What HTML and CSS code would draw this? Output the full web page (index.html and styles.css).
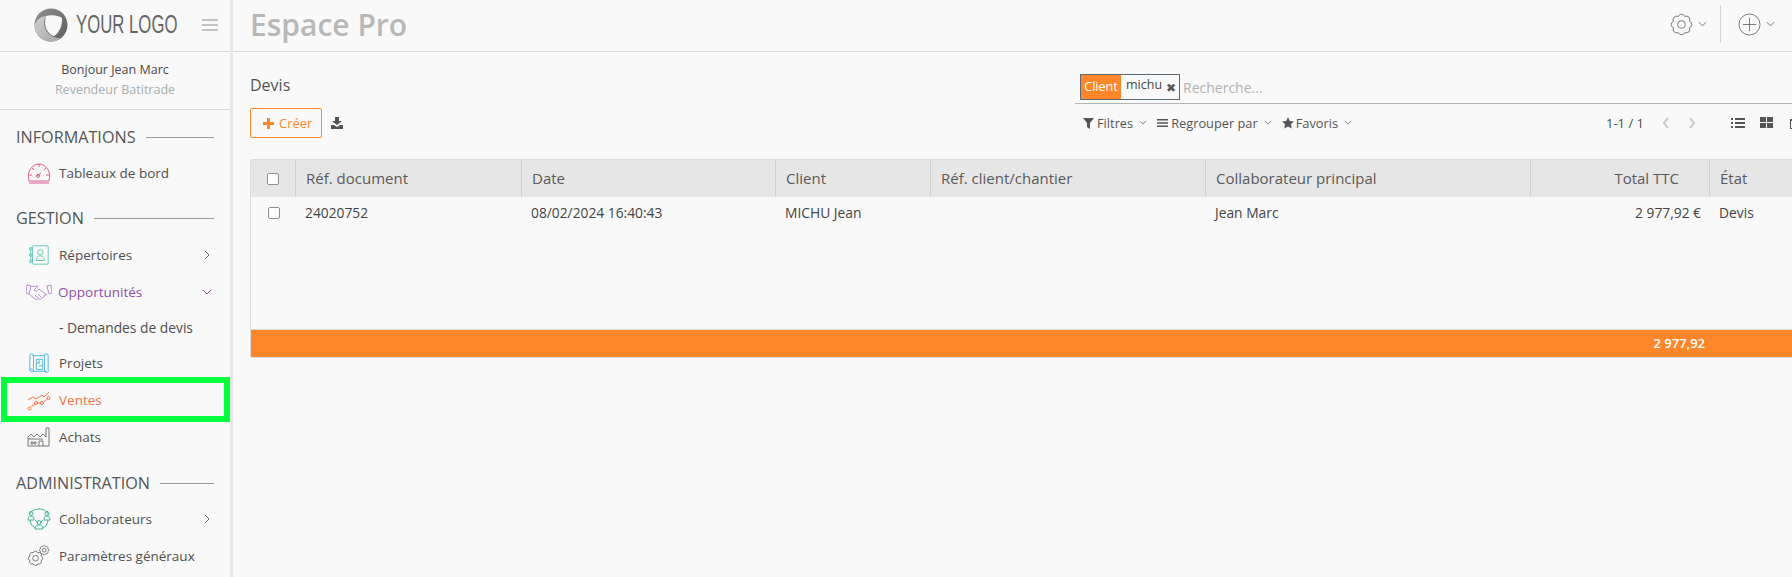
FILE: index.html
```html
<!DOCTYPE html>
<html lang="fr">
<head>
<meta charset="utf-8">
<title>Espace Pro</title>
<link rel="stylesheet" href="styles.css">
</head>
<body>
<div class="sidebar">
	<div class="brand">
		<svg class="brand-mark" viewBox="0 0 34 34">
			<defs>
				<linearGradient id="lg1" x1="0" y1="0" x2="1" y2="1"><stop offset="0" stop-color="#8f8f8f"/><stop offset="1" stop-color="#5e5e5e"/></linearGradient>
				<linearGradient id="lg2" x1="0" y1="0" x2="1" y2="1"><stop offset="0" stop-color="#d0d0d0"/><stop offset="1" stop-color="#a5a7a7"/></linearGradient>
			</defs>
			<circle cx="17" cy="17" r="16.500" fill="url(#lg1)"/>
			<path d="M.5 17C3 11 7 8.500 12 8 9 12 9.500 20 14 25c3 3.500 7 5 13 5-3 2.500-6 3.500-10 3.500C8 33.500 1 26 .5 17z" fill="url(#lg2)"/>
			<path d="M12 8c5-1.500 12-1 16 2 .5 8-3 15-8 18C14 27 9 18 12 8z" fill="#f9f9f9"/>
		</svg>
		<span class="brand-name">YOUR LOGO</span>
		<svg class="burger" viewBox="0 0 16 12"><path d="M0 1h16M0 6h16M0 11h16" stroke="#8b8b8b" fill="none"/></svg>
	</div>
	<div class="user">
		<div class="user-name">Bonjour Jean Marc</div>
		<div class="user-role">Revendeur Batitrade</div>
	</div>
	<div class="section first"><span>INFORMATIONS</span><i></i></div>
	<a class="item" href="#">
		<svg class="ico" viewBox="0 0 24 22" stroke="#e0578f"><path d="M2 19C-1 9 6 2 12 2s13 7 10 17zM2 21h20M12 2v3M5 6l2 2M19 6l-2 2M2 13h3M22 13h-3M10 14l4-3"/><circle cx="11" cy="14" r="1.500"/></svg>
		<span>Tableaux de bord</span>
	</a>
	<div class="section"><span>GESTION</span><i></i></div>
	<a class="item" href="#">
		<svg class="ico" viewBox="0 0 24 24" stroke="#5cc8b5"><rect x="5" y="2" width="17" height="20" rx="1"/><path d="M3 4v16M9 18c0-4 2-5 4-5s5 1 5 5z"/><circle cx="13.500" cy="9" r="3"/><circle cx="3" cy="5" r="1.500"/><circle cx="3" cy="12" r="1.500"/><circle cx="3" cy="19" r="1.500"/></svg>
		<span>Répertoires</span>
		<svg class="caret" viewBox="0 0 10 10"><path d="M3 1l4 4-4 4"/></svg>
	</a>
	<a class="item purple" href="#">
		<svg class="ico wide" viewBox="0 0 26 18" stroke="#b78fd0"><path d="M1 2l4 1-2 8-3-1zM25 2l-4 1 2 8 3-1zM5 3c3 1 5 0 7 0l-4 4c1 2 3 1 5-1l8 6M3 11l6 5c2 1 3 0 4 0s3 0 3-1 2 0 2-2 3 0 3-2M9 12l3 3M12 11l3 3"/></svg>
		<span>Opportunités</span>
		<svg class="caret" viewBox="0 0 10 10"><path d="M1 3l4 4 4-4"/></svg>
	</a>
	<a class="item sub" href="#"><span>- Demandes de devis</span></a>
	<a class="item" href="#">
		<svg class="ico" viewBox="0 0 24 24" stroke="#49b4d8"><path d="M5 4h14M5 21h15M2 20V4a2 2 0 0 1 4 0v14M2 20a2.500 2.500 0 0 0 4 1 2 2 0 0 0-4-1M18 21V4a2 2 0 0 1 4 0v15a2 2 0 0 1-4 2M9 8h7v11H9zM9 12h4M12 8v4M12 15h4"/></svg>
		<span>Projets</span>
	</a>
	<a class="item active" href="#">
		<svg class="ico" viewBox="0 0 24 22" stroke="#f5734a"><path d="M1 11l5-3 3 2 6-4 2 2 5-5M4 18l4-3M10 14h4M16.500 13l4-3"/><circle cx="2.500" cy="19.500" r="1.500"/><circle cx="9" cy="14" r="1.500"/><circle cx="15" cy="14" r="1.500"/><circle cx="21.500" cy="9" r="1.500"/></svg>
		<span>Ventes</span>
		<div class="highlight"></div>
	</a>
	<a class="item" href="#">
		<svg class="ico" viewBox="0 0 24 20" stroke="#777"><path d="M1 19V10l3-3 3 3 3-3 3 3 3-3 3 3V1h3v18zM1 12h15M12 19v-5h4v5M4 15h2v2H4zM7 15h2v2H7z"/></svg>
		<span>Achats</span>
	</a>
	<div class="section last"><span>ADMINISTRATION</span><i></i></div>
	<a class="item" href="#">
		<svg class="ico" viewBox="0 0 24 22" stroke="#3fb49a"><path d="M3 6c1-3 5-5 9-5s8 2 9 5M3 12c0 4 3 7 5 8M21 12c0 4-3 7-5 8M1 12c0-3 1-4 3-4s3 1 3 4zM17 12c0-3 1-4 3-4s3 1 3 4zM8 21c0-3 2-4 4-4s4 1 4 4zM8 12l3 3M16 12l-3 3"/><circle cx="4" cy="5.500" r="2"/><circle cx="20" cy="5.500" r="2"/><circle cx="12" cy="14.500" r="2"/></svg>
		<span>Collaborateurs</span>
		<svg class="caret" viewBox="0 0 10 10"><path d="M3 1l4 4-4 4"/></svg>
	</a>
	<a class="item" href="#">
		<svg class="ico" viewBox="0 0 24 23" stroke="#777"><path vector-effect="non-scaling-stroke" transform="translate(0 5.500) scale(.7)" d="M8.600 3.700A3.600 3.600 0 0 1 15.400 3.700 3.600 3.600 0 0 1 20.300 8.600 3.600 3.600 0 0 1 20.300 15.400 3.600 3.600 0 0 1 15.400 20.300 3.600 3.600 0 0 1 8.600 20.300 3.600 3.600 0 0 1 3.700 15.400 3.600 3.600 0 0 1 3.700 8.600 3.600 3.600 0 0 1 8.600 3.700z"/><circle cx="8.400" cy="13.900" r="3"/><path vector-effect="non-scaling-stroke" transform="translate(12 0) scale(.45)" d="M8.600 3.700A3.600 3.600 0 0 1 15.400 3.700 3.600 3.600 0 0 1 20.300 8.600 3.600 3.600 0 0 1 20.300 15.400 3.600 3.600 0 0 1 15.400 20.300 3.600 3.600 0 0 1 8.600 20.300 3.600 3.600 0 0 1 3.700 15.400 3.600 3.600 0 0 1 3.700 8.600 3.600 3.600 0 0 1 8.600 3.700z"/><circle cx="17.400" cy="5.400" r="2"/></svg>
		<span>Paramètres généraux</span>
	</a>
</div>

<div class="main">
	<div class="topbar">
		<div class="app-title">Espace Pro</div>
		<div class="top-tools">
			<svg class="top-ico" viewBox="0 0 24 24"><path d="M8.600 3.700A3.600 3.600 0 0 1 15.400 3.700 3.600 3.600 0 0 1 20.300 8.600 3.600 3.600 0 0 1 20.300 15.400 3.600 3.600 0 0 1 15.400 20.300 3.600 3.600 0 0 1 8.600 20.300 3.600 3.600 0 0 1 3.700 15.400 3.600 3.600 0 0 1 3.700 8.600 3.600 3.600 0 0 1 8.600 3.700z"/><circle cx="12" cy="12" r="4"/></svg>
			<svg class="top-caret" viewBox="0 0 10 6"><path d="M1 1l4 4 4-4"/></svg>
			<div class="top-sep"></div>
			<svg class="top-ico" viewBox="0 0 24 24"><circle cx="12" cy="12" r="11"/><path d="M12 5v14M5 12h14"/></svg>
			<svg class="top-caret" viewBox="0 0 10 6"><path d="M1 1l4 4 4-4"/></svg>
		</div>
	</div>

	<div class="panel">
		<div class="panel-left">
			<div class="crumb">Devis</div>
			<div class="actions">
				<button class="create"><svg class="plus" viewBox="0 0 11 11"><path d="M4 0h3v4h4v3H7v4H4V7H0V4h4z"/></svg>Créer</button>
				<svg class="download" viewBox="0 0 12 12"><path d="M4 0h4v4h3L6 8 1 4h3zM0 8h3l3 2 3-2h3v4H0z" fill="#555"/></svg>
			</div>
		</div>
		<div class="panel-right">
			<div class="search">
				<div class="facet"><span class="facet-key">Client</span><span class="facet-val">michu</span><span class="facet-x">✖</span></div>
				<span class="search-hint">Recherche...</span>
			</div>
			<div class="filters">
				<div class="options">
					<span class="opt"><svg viewBox="0 0 12 12"><path d="M0 1h11L7 6v6L4 10V6z"/></svg>Filtres<svg class="opt-caret" viewBox="0 0 10 6"><path d="M1 1l4 4 4-4"/></svg></span>
					<span class="opt"><svg viewBox="0 0 12 12"><path d="M0 2h11v1.500H0zM0 5.200h11v1.500H0zM0 8.500h11V10H0z"/></svg>Regrouper par<svg class="opt-caret" viewBox="0 0 10 6"><path d="M1 1l4 4 4-4"/></svg></span>
					<span class="opt"><svg viewBox="0 0 12 12"><path d="M6 0l1.800 3.900 4.200.5-3.100 2.900.8 4.200L6 9.400l-3.700 2.100.8-4.200L0 4.400l4.200-.5z"/></svg>Favoris<svg class="opt-caret" viewBox="0 0 10 6"><path d="M1 1l4 4 4-4"/></svg></span>
				</div>
				<div class="pager">
					<span>1-1 / 1</span>
					<svg class="pager-arrow" viewBox="0 0 8 12"><path d="M6 1L2 6l4 5"/></svg>
					<svg class="pager-arrow" viewBox="0 0 8 12"><path d="M2 1l4 5-4 5"/></svg>
				</div>
				<div class="views">
					<svg viewBox="0 0 14 12"><path d="M0 1h2v2H0zM4 1h10v2H4zM0 5h2v2H0zM4 5h10v2H4zM0 9h2v2H0zM4 9h10v2H4z"/></svg>
					<svg viewBox="0 0 14 12"><path d="M0 0h6v5H0zM7 0h6v5H7zM0 6h6v5H0zM7 6h6v5H7z"/></svg>
					<svg viewBox="0 0 14 12"><path d="M1 2h11v10H1zM2 4v7h9V4z" fill-rule="evenodd"/></svg>
				</div>
			</div>
		</div>
	</div>

	<table class="list">
		<colgroup>
			<col class="c-check"><col class="c-ref"><col class="c-date"><col class="c-client"><col class="c-chantier"><col class="c-collab"><col class="c-total"><col class="c-state">
		</colgroup>
		<thead>
			<tr>
				<th class="check"><span class="box"></span></th>
				<th>Réf. document</th>
				<th>Date</th>
				<th>Client</th>
				<th>Réf. client/chantier</th>
				<th>Collaborateur principal</th>
				<th class="num">Total TTC</th>
				<th>État</th>
			</tr>
		</thead>
		<tbody>
			<tr class="row">
				<td class="check"><span class="box"></span></td>
				<td>24020752</td>
				<td>08/02/2024 16:40:43</td>
				<td>MICHU Jean</td>
				<td></td>
				<td>Jean Marc</td>
				<td class="num">2 977,92 €</td>
				<td>Devis</td>
			</tr>
			<tr class="filler"><td colspan="8"></td></tr>
		</tbody>
		<tfoot>
			<tr>
				<td colspan="6"></td>
				<td class="num">2 977,92</td>
				<td></td>
			</tr>
		</tfoot>
	</table>
</div>
</body>
</html>
```

FILE: styles.css
```css
* {
	box-sizing: border-box;
}

html, body {
	margin: 0;
	height: 100%;
	overflow: hidden;
}

body {
	display: flex;
	background-color: #f9f9f9;
	font-family: "Open Sans", "Noto Sans", sans-serif;
	font-size: 13.500px;
	color: #4a4a4a;
}

/* sidebar */
.sidebar {
	width: 233px;
	flex: none;
	height: 100%;
	border-right: 3px solid #e6e6e6;
}

.brand {
	height: 52px;
	display: flex;
	align-items: center;
	padding: 0 0 2px 34px;
	border-bottom: 1px solid #d9d9d9;
}

.brand-mark {
	width: 34px;
	height: 34px;
	flex: none;
}

.brand-name {
	margin-left: 8px;
	font-family: "Liberation Sans", sans-serif;
	font-size: 25px;
	color: #666;
	width: 126px;
	white-space: nowrap;
	transform: scaleX(.67);
	transform-origin: left center;
}

.burger {
	width: 16px;
	height: 12px;
}

.user {
	height: 58px;
	padding-top: 8px;
	text-align: center;
	border-bottom: 1px solid #d9d9d9;
	line-height: 20px;
	font-size: 12.500px;
}

.user-role {
	color: #a9adad;
}

.section {
	display: flex;
	align-items: center;
	gap: 10px;
	padding: 0 16px;
	height: 22px;
	margin-top: 16px;
	font-size: 16.200px;
	color: #555;
}

.section.first {
	margin-top: 16px;
}

.section.last {
	margin-top: 17px;
}

.section i {
	flex: 1;
	height: 1px;
	background-color: #999;
}

.item {
	position: relative;
	display: flex;
	align-items: center;
	height: 37px;
	padding: 0 18px 0 27px;
	text-decoration: none;
	color: #4f4f4f;
}

.section + .item {
	margin-top: 7px;
}

.section.first + .item, .section.last + .item {
	margin-top: 6px;
}

.ico {
	width: 24px;
	height: 22px;
	flex: none;
	margin-right: 8px;
	fill: none;
	stroke-width: 1;
}

.ico.wide {
	width: 26px;
	height: 18px;
	margin: 0 6px 0 -1px;
}

.item span {
	flex: 1;
}

.caret {
	width: 10px;
	height: 10px;
	fill: none;
	stroke: #666;
}

.purple {
	color: #8e4ea8;
}

.purple .caret {
	stroke: #8e4ea8;
}

.sub {
	height: 34px;
	padding-left: 59px;
	font-size: 13.800px;
}

.active {
	color: #f5734a;
}

.highlight {
	position: absolute;
	top: -4px;
	bottom: -4px;
	left: 1px;
	right: 0;
	border: 6px solid #00ff3c;
}

/* main area */
.main {
	flex: 1;
	min-width: 0;
	overflow: hidden;
}

.topbar {
	height: 52px;
	display: flex;
	align-items: center;
	justify-content: space-between;
	padding: 0 17px 3px 17px;
	border-bottom: 1px solid #d9d9d9;
}

.app-title {
	font-size: 30px;
	font-weight: 600;
	color: #b8b8b8;
}

.top-tools {
	display: flex;
	align-items: center;
}

.top-ico {
	width: 23px;
	height: 23px;
	fill: none;
	stroke: #777;
	stroke-width: 1;
}

.top-caret {
	width: 9px;
	height: 6px;
	margin-left: 5px;
	fill: none;
	stroke: #666;
}

.top-sep {
	width: 1px;
	height: 38px;
	margin: 0 17px 0 13px;
	background-color: #d4d4d4;
}

.panel {
	display: flex;
	justify-content: space-between;
	padding-left: 17px;
	height: 107px;
}

.panel-left {
	padding-top: 22px;
}

.crumb {
	font-size: 16px;
	line-height: 22px;
	color: #555;
}

.actions {
	display: flex;
	align-items: center;
	margin-top: 12px;
}

.create {
	display: flex;
	align-items: center;
	width: 72px;
	height: 30px;
	padding: 0 0 0 12px;
	background: none;
	border: 1px solid #ff8629;
	border-radius: 2px;
	color: #ff8629;
	font-family: inherit;
	font-size: 13px;
}

.plus {
	width: 11px;
	height: 11px;
	margin-right: 5px;
	fill: #ff8629;
}

.download {
	width: 12px;
	height: 12px;
	margin-left: 9px;
}

.panel-right {
	width: 717px;
	flex: none;
	padding-top: 22px;
}

.search {
	display: flex;
	align-items: center;
	gap: 3px;
	height: 30px;
	padding: 0 0 3px 5px;
	border-bottom: 1px solid #b5b5b5;
}

.facet {
	display: flex;
	align-items: center;
	width: 100px;
	height: 26px;
	border: 1px solid #5c6a74;
	font-size: 12.500px;
}

.facet-key {
	width: 40px;
	height: 100%;
	line-height: 23px;
	text-align: center;
	color: #fff;
	background-color: #ff8629;
}

.facet-val {
	margin: -6px 0 0 5px;
}

.facet-x {
	margin-left: 4px;
	font-size: 12px;
	color: #555;
}

.search-hint {
	font-size: 14px;
	color: #b3b3b3;
}

.filters {
	display: flex;
	align-items: center;
	height: 37px;
	padding-left: 8px;
}

.options {
	display: flex;
	flex: none;
	gap: 10px;
	width: 523px;
	font-size: 12.800px;
	color: #555;
}

.opt {
	display: flex;
	align-items: center;
}

.opt svg {
	width: 12px;
	height: 12px;
	margin-right: 2px;
	fill: #555;
}

.opt .opt-caret {
	width: 8px;
	height: 5px;
	margin: 0 0 0 6px;
	fill: none;
	stroke: #666;
}

.pager {
	display: flex;
	flex: none;
	align-items: center;
	width: 125px;
	font-size: 13px;
}

.pager-arrow {
	width: 8px;
	height: 12px;
	margin-left: 18px;
	fill: none;
	stroke: #c8c8c8;
	stroke-width: 2;
}

.views {
	display: flex;
	flex: none;
	gap: 15px;
}

.views svg {
	width: 14px;
	height: 12px;
	flex: none;
	fill: #555;
}

/* list */
.list {
	width: 1560px;
	margin-left: 17px;
	table-layout: fixed;
	border-collapse: separate;
	border-spacing: 0;
	border: 1px solid #dcdcdc;
	border-radius: 3px;
}

.c-check { width: 45px; }
.c-ref { width: 226px; }
.c-date { width: 254px; }
.c-client { width: 155px; }
.c-chantier { width: 275px; }
.c-collab { width: 325px; }
.c-total { width: 179px; }
.c-state { width: 100px; }

.list th {
	height: 37px;
	padding: 0 10px 2px;
	text-align: left;
	font-weight: 400;
	font-size: 15px;
	color: #5a5a5a;
	background-color: #e6e6e6;
	border-right: 1px solid #d0d0d0;
}

.list th.num {
	padding-right: 30px;
	text-align: right;
}

.list th:last-child {
	border-right: none;
}

.list td {
	padding: 0 9px 1px;
}

.row td {
	height: 32px;
	font-size: 13.800px;
	color: #444;
}

.list td.num {
	text-align: right;
}

.check {
	text-align: center;
}

.list th.check {
	text-align: center;
	padding: 0;
}

.list td.check {
	padding: 0;
}

.box {
	display: block;
	width: 12px;
	height: 12px;
	margin: auto;
	border: 1px solid #8f8f8f;
	border-radius: 2px;
	background-color: #fff;
}

.filler td {
	height: 100px;
}

.list tfoot td {
	height: 28px;
	border-top: 1px solid #dcdcdc;
	background-color: #ff8629;
	color: #fff;
	font-weight: 600;
	font-size: 13px;
}

.list tfoot td.num {
	padding-right: 5px;
}
```
